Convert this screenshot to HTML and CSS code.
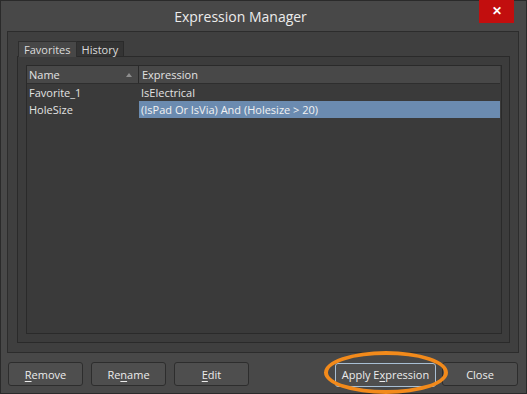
FILE: index.html
```html
<!DOCTYPE html>
<html lang="en">
<head>
    <meta charset="UTF-8">
    <title>Expression Manager</title>
    <link rel="stylesheet" href="styles.css">
</head>
<body>
    <div class="window">
        <div class="titlebar">
            <div class="title">Expression Manager</div>
            <div class="close-x">&#x2715;</div>
        </div>

        <div class="panel">
            <div class="tabs">
                <div class="tab active">Favorites</div>
                <div class="tab">History</div>
            </div>
            <div class="tab-body">
                <div class="list">
                    <div class="row head">
                        <div class="col-name">Name <span class="sort"></span></div>
                        <div class="col-expr">Expression</div>
                    </div>
                    <div class="row">
                        <div class="col-name">Favorite_1</div>
                        <div class="col-expr">IsElectrical</div>
                    </div>
                    <div class="row">
                        <div class="col-name">HoleSize</div>
                        <div class="col-expr selected">(IsPad Or IsVia) And (Holesize &gt; 20)</div>
                    </div>
                </div>
            </div>
        </div>

        <div class="footer">
            <button class="btn"><u>R</u>emove</button>
            <button class="btn">Re<u>n</u>ame</button>
            <button class="btn"><u>E</u>dit</button>
            <div class="spacer"></div>
            <div class="highlight-wrap">
                <button class="btn btn-default">Apply E<u>x</u>pression</button>
                <div class="ring"></div>
            </div>
            <button class="btn btn-close">Close</button>
        </div>
    </div>
</body>
</html>
```

FILE: styles.css
```css
body {
    margin: 0;
    background: #2b2b2b;
    font-family: 'Open Sans', 'Noto Sans', sans-serif;
    color: #e2e2e2;
}

.window {
    width: 527px;
    height: 394px;
    box-sizing: border-box;
    border: 1px solid #2a2a2a;
    background: #484848;
    display: flex;
    flex-direction: column;
}

.titlebar {
    height: 30px;
    position: relative;
    display: flex;
    justify-content: center;
    padding-right: 46px;
}

.title {
    font-size: 14px;
    color: #ececec;
    line-height: 31px;
}

.close-x {
    position: absolute;
    top: -1px;
    right: 12px;
    width: 35px;
    height: 23px;
    background: #c20e0e;
    color: #fff;
    font-size: 12px;
    font-weight: bold;
    text-align: center;
    line-height: 22px;
}

.panel {
    margin: 0 7px 0 6px;
    height: 322px;
    box-sizing: border-box;
    border: 1px solid #2c2c2c;
    background: #3f3f3f;
    padding: 9px 8px 9px 9px;
    display: flex;
    flex-direction: column;
}

.tabs {
    display: flex;
    align-items: flex-start;
    padding-left: 1px;
    position: relative;
    z-index: 1;
    margin-bottom: -1px;
}

.tab {
    font-size: 11px;
    height: 14px;
    line-height: 15px;
    padding: 0 5px;
    background: #343434;
    border: 1px solid #2a2a2a;
    border-bottom: none;
    color: #dcdcdc;
}

.tab.active {
    height: 15px;
    background: #474747;
    border-color: #2e2e2e;
}

.tab + .tab {
    border-left: none;
}

.tab-body {
    flex: 1;
    border: 1px solid #2a2a2a;
    background: #3c3c3c;
    padding: 8px 7px 8px 8px;
    display: flex;
}

.list {
    flex: 1;
    border: 1px solid #2a2a2a;
    background: #3a3a3a;
}

.row {
    display: flex;
    height: 17px;
    font-size: 11px;
    line-height: 17px;
}

.row.head {
    background: #484848;
    border-bottom: 1px solid #2e2e2e;
    margin-right: 1px;
}

.col-name {
    width: 109px;
    padding-left: 2px;
    position: relative;
}

.row.head .col-name {
    border-right: 1px solid #2a2a2a;
}

.sort {
    position: absolute;
    right: 6px;
    top: 7px;
    width: 0;
    height: 0;
    border-left: 3.5px solid transparent;
    border-right: 3.5px solid transparent;
    border-bottom: 4px solid #8e8e8e;
}

.col-expr {
    flex: 1;
    padding-left: 2px;
    margin-left: 1px;
}

.col-expr.selected {
    background: #6b8bb0;
    color: #f2f2f2;
    margin-right: 1px;
}

.footer {
    display: flex;
    align-items: flex-start;
    padding: 9px 8px 0 7px;
    gap: 8px;
}

.spacer {
    flex: 1;
}

.btn {
    width: 75px;
    height: 24px;
    box-sizing: border-box;
    background: #4e4e4e;
    border: 1px solid #2d2d2d;
    border-radius: 3px;
    color: #ececec;
    font-family: 'Open Sans', 'Noto Sans', sans-serif;
    font-size: 11px;
    padding: 0;
}

.btn u {
    text-underline-offset: 2px;
}

.highlight-wrap {
    position: relative;
}

.btn-default {
    width: 101px;
    border-color: #a8bfd4;
}

.btn-close {
    margin-left: -2px;
    width: 76px;
}

.ring {
    position: absolute;
    left: -11px;
    top: -11px;
    width: 116px;
    height: 35px;
    border: 4px solid #f28a1b;
    border-radius: 50%;
}
```
